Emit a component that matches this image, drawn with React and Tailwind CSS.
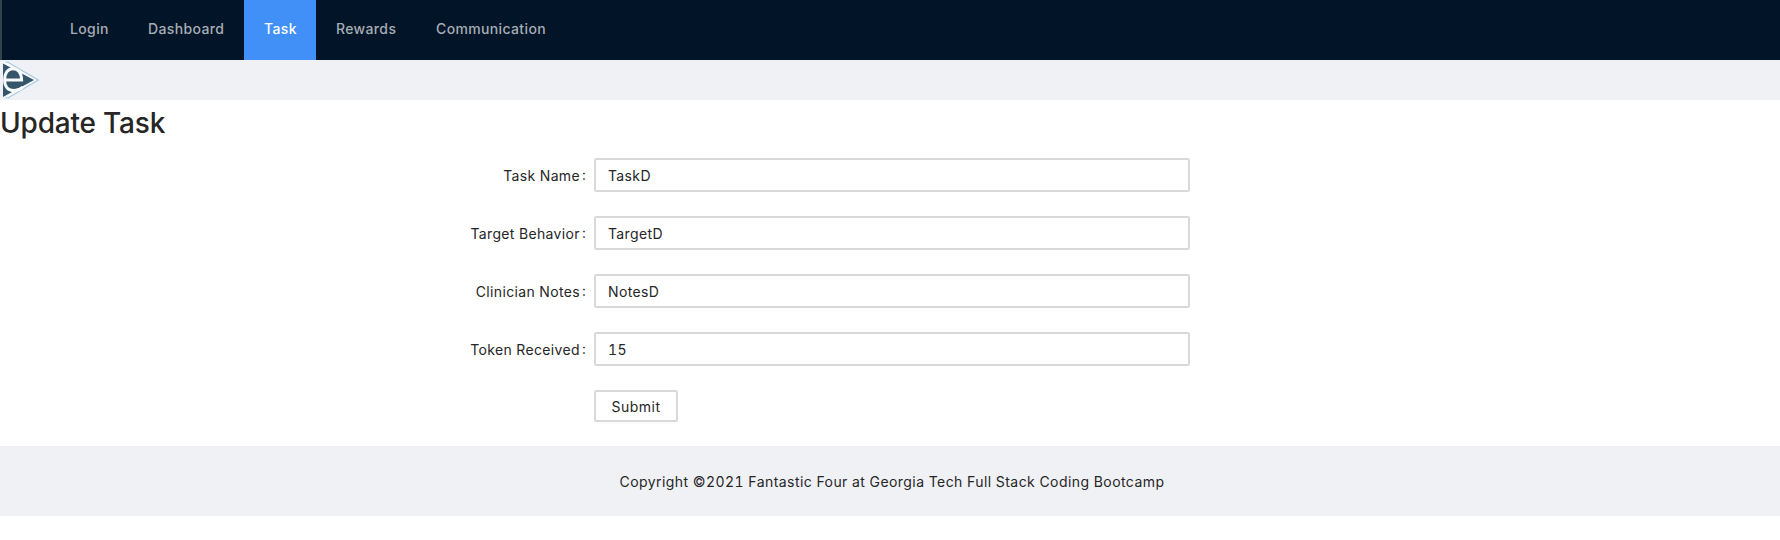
const NAV = [
  { label: "Login", width: "w-[78px]" },
  { label: "Dashboard", width: "w-[116px]" },
  { label: "Task", width: "w-[72px]", active: true },
  { label: "Rewards", width: "w-[100px]" },
  { label: "Communication", width: "w-[150px]" },
];

const FIELDS = [
  { label: "Task Name", value: "TaskD" },
  { label: "Target Behavior", value: "TargetD" },
  { label: "Clinician Notes", value: "NotesD" },
  { label: "Token Received", value: "15" },
];

function Logo() {
  return (
    <svg width="40" height="40" viewBox="0 0 40 40" className="block">
      <path d="M3 1.5 L8 1.8 L38.5 20 L8 38.5 L3 38.5 Z" fill="#f8fafb" />
      <path d="M5.5 2.2 L8 2.2 L38.3 20 L8 38 L5.5 37.8" fill="none" stroke="#9cc8de" strokeWidth="1.1" />
      <path d="M3 3.5 L34 20 L3 37 Z" fill="#34556a" />
      <path
        d="M4 20 H21.6 C21.4 12.5 18 8.800 12.800 8.800 C7.500 8.800 4.600 13.500 4.600 20 C4.600 27 8.500 30.600 14 30.600 C17.500 30.600 20.500 29.200 22.800 27"
        fill="none"
        stroke="#f8fafb"
        strokeWidth="3"
      />
    </svg>
  );
}

export default function App() {
  return (
    <div className="h-[540px] w-full overflow-hidden bg-white font-['Inter',sans-serif] text-[14px] tracking-[0.36px] text-[#262626] tabular-nums">
      <header className="flex h-[60px] border-l-2 border-[#33414d] bg-[#021427] pl-12 font-medium text-[#a6adb4]">
        {NAV.map((item) => (
          <a
            key={item.label}
            className={`${item.width} flex h-full shrink-0 items-center px-5 pb-[3px] whitespace-nowrap ${
              item.active ? "bg-[#4190f7] text-white" : ""
            }`}
          >
            {item.label}
          </a>
        ))}
      </header>
      <div className="h-10 bg-[#f0f1f5]">
        <Logo />
      </div>
      <main className="h-[346px]">
        <h1 className="h-[58px] pt-1 text-[28px] leading-[38px] font-medium tracking-[-0.2px] text-[#262626]">
          Update Task
        </h1>
        <form className="flex flex-col gap-6" onSubmit={(e) => e.preventDefault()}>
          {FIELDS.map((field) => (
            <div key={field.label} className="flex h-[34px] items-center">
              <label className="flex w-[594px] justify-end pr-2">
                <span>{field.label}</span>
                <span className="relative -top-px ml-[2px] w-[4px]">:</span>
              </label>
              <input
                defaultValue={field.value}
                className="h-[34px] w-[596px] rounded-[2px] border-2 border-[#d9d9d9] bg-white px-3 outline-none"
              />
            </div>
          ))}
          <button className="ml-[594px] h-8 w-[84px] rounded-[2px] border-2 border-[#d9d9d9] bg-white pt-[2px] leading-[24px] tracking-[0.5px] shadow-[0_2px_0_rgba(0,0,0,0.016)]">
            Submit
          </button>
        </form>
      </main>
      <footer className="flex h-[70px] items-center justify-center bg-[#f0f1f5] pl-1 tracking-[0.44px]">
        Copyright ©2021 Fantastic Four at Georgia Tech Full Stack Coding Bootcamp
      </footer>
    </div>
  );
}
